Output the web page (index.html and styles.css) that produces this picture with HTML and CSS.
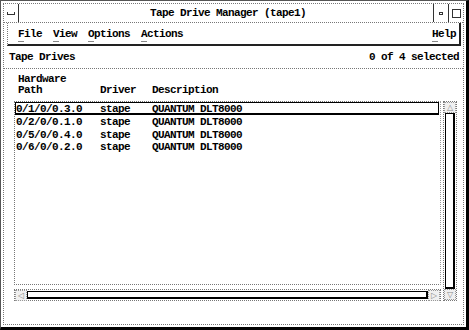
FILE: index.html
```html
<!DOCTYPE html>
<html lang="en">
<head>
    <meta charset="UTF-8">
    <title>Tape Drive Manager (tape1)</title>
    <link rel="stylesheet" href="styles.css">
</head>
<body>
    <div class="frame">
        <div class="window">
            <div class="titlebar">
                <div class="wm-btn menu-btn"><span class="dash"></span></div>
                <div class="title">Tape Drive Manager (tape1)</div>
                <div class="wm-btn"><span class="dot"></span></div>
                <div class="wm-btn"><span class="square"></span></div>
            </div>
            <div class="menubar">
                <span class="menu-item"><u>F</u>ile</span>
                <span class="menu-item"><u>V</u>iew</span>
                <span class="menu-item"><u>O</u>ptions</span>
                <span class="menu-item"><u>A</u>ctions</span>
                <span class="menu-item help"><u>H</u>elp</span>
            </div>
            <div class="status">
                <span>Tape Drives</span>
                <span>0 of 4 selected</span>
            </div>
            <div class="content">
                <div class="columns">
                    <span class="col-path">Hardware<br>Path</span>
                    <span class="col-driver">Driver</span>
                    <span class="col-desc">Description</span>
                </div>
                <div class="list-area">
                    <div class="list-col">
                        <div class="list">
                            <div class="row selected"><span class="col-path">0/1/0/0.3.0</span><span class="col-driver">stape</span><span class="col-desc">QUANTUM DLT8000</span></div>
                            <div class="row"><span class="col-path">0/2/0/0.1.0</span><span class="col-driver">stape</span><span class="col-desc">QUANTUM DLT8000</span></div>
                            <div class="row"><span class="col-path">0/5/0/0.4.0</span><span class="col-driver">stape</span><span class="col-desc">QUANTUM DLT8000</span></div>
                            <div class="row"><span class="col-path">0/6/0/0.2.0</span><span class="col-driver">stape</span><span class="col-desc">QUANTUM DLT8000</span></div>
                        </div>
                        <div class="hscroll">
                            <div class="arrow"><span class="glyph">&#9665;</span></div>
                            <div class="trough"><div class="thumb-h"></div></div>
                            <div class="arrow"><span class="glyph">&#9655;</span></div>
                        </div>
                    </div>
                    <div class="vscroll">
                        <div class="arrow"><span class="glyph">&#9651;</span></div>
                        <div class="trough"><div class="thumb-v"></div></div>
                        <div class="arrow"><span class="glyph">&#9661;</span></div>
                    </div>
                </div>
            </div>
        </div>
    </div>
</body>
</html>
```

FILE: styles.css
```css
* {
    box-sizing: border-box;
}

body {
    margin: 0;
    width: 469px;
    height: 330px;
    background-color: #fff;
    font-family: 'Liberation Mono', 'DejaVu Sans Mono', monospace;
    font-size: 11px;
    letter-spacing: -0.6px;
    font-weight: bold;
    color: #000;
    overflow: hidden;
}

.frame {
    height: 330px;
    border: 1px solid #555;
    border-right: 3px solid #000;
    border-bottom: 3px solid #000;
    padding: 2px;
    background-color: #fff;
}

.window {
    height: 100%;
    border: 1px dotted #777;
    display: flex;
    flex-direction: column;
}

.titlebar {
    display: flex;
    height: 19px;
    border-bottom: 1px dotted #777;
}

.wm-btn {
    width: 15px;
    display: flex;
    align-items: center;
    justify-content: center;
    border-left: 1px solid #333;
}

.menu-btn {
    border-left: none;
    border-right: 1px solid #333;
}

.dash {
    width: 8px;
    height: 3px;
    border: 1px solid #333;
    border-top: none;
}

.dot {
    width: 4px;
    height: 3px;
    border: 1px solid #333;
}

.square {
    width: 9px;
    height: 9px;
    border: 1px solid #333;
}

.title {
    flex: 1;
    text-align: center;
    line-height: 18px;
    padding-left: 4px;
}

.menubar {
    display: flex;
    height: 23px;
    margin: 0 2px 0 3px;
    padding: 0 3px 0 10px;
    align-items: center;
    border-left: 1px dotted #777;
    border-right: 2px solid #222;
    border-bottom: 2px solid #222;
}

.menu-item {
    margin-right: 11px;
}

.menu-item u {
    text-decoration: none;
    border-bottom: 1px solid #888;
    padding-bottom: 1px;
}

.help {
    margin-left: auto;
    margin-right: 0;
}

.status {
    display: flex;
    justify-content: space-between;
    height: 23px;
    line-height: 22px;
    padding: 0 4px 0 5px;
    border-bottom: 1px dotted #777;
}

.content {
    flex: 1;
    display: flex;
    flex-direction: column;
    padding: 5px 6px 0 10px;
}

.columns {
    display: flex;
    align-items: flex-end;
    line-height: 11px;
    padding-left: 4px;
    height: 22px;
}

.columns .col-path {
    width: 82px;
}

.col-path {
    width: 84px;
}

.col-driver {
    width: 52px;
}

.list-area {
    display: flex;
    margin-top: 5px;
}

.list-col {
    flex: 1;
    display: flex;
    flex-direction: column;
}

.list {
    height: 184px;
    border: 1px dotted #777;
    border-right-color: #999;
    padding: 0 1px 1px 0;
}

.row {
    display: flex;
    height: 12.5px;
    line-height: 12px;
    border: 1px solid transparent;
}

.row.selected {
    border: 1px solid #000;
    border-bottom-width: 2px;
    height: 13px;
}

.hscroll {
    display: flex;
    height: 12px;
    margin-top: 4px;
    border: 1px dotted #777;
}

.hscroll .trough {
    flex: 1;
    padding: 1px 0;
}

.thumb-h {
    height: 100%;
    border: 1px solid #000;
    border-right-width: 2px;
    border-bottom-width: 2px;
}

.vscroll {
    width: 14px;
    margin-left: 2px;
    display: flex;
    flex-direction: column;
    height: 200px;
    border: 1px dotted #777;
}

.vscroll .trough {
    flex: 1;
    padding: 0 1px;
}

.thumb-v {
    height: 100%;
    border: 1px solid #000;
    border-right-width: 2px;
    border-bottom-width: 2px;
}

.arrow {
    width: 12px;
    height: 11px;
    display: flex;
    align-items: center;
    justify-content: center;
    border: 1px dotted #999;
    background-color: #f0f0f0;
}

.glyph {
    font-family: 'DejaVu Sans', sans-serif;
    font-weight: normal;
    font-size: 8px;
    letter-spacing: 0;
    color: #888;
    line-height: 8px;
}
```
